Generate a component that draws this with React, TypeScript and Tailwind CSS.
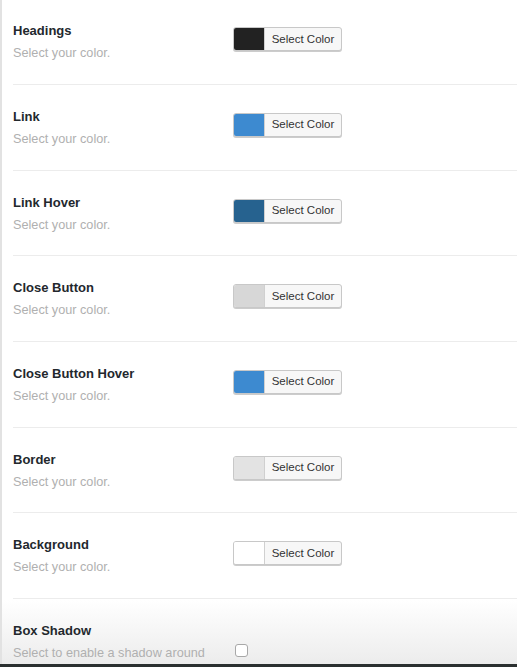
import { type FC } from 'react'

type ColorRow = {
  label: string
  color: string
}

const rows: ColorRow[] = [
  { label: 'Headings', color: '#222222' },
  { label: 'Link', color: '#3d8ad0' },
  { label: 'Link Hover', color: '#26628f' },
  { label: 'Close Button', color: '#d7d7d7' },
  { label: 'Close Button Hover', color: '#3d8ad0' },
  { label: 'Border', color: '#e3e3e3' },
  { label: 'Background', color: '#ffffff' },
]

const ColorButton: FC<{ color: string }> = ({ color }) => (
  <button className="mt-[4px] flex h-[24px] w-[109px] items-stretch overflow-hidden rounded-[3px] border border-[#c8c8c8] bg-[#f7f7f7] shadow-[0_1px_0_#ccc]">
    {/* swatch */}
    <span className="w-[31px] border-r border-[#d0d0d0]" style={{ backgroundColor: color }} />
    <span className="flex flex-1 items-center justify-center text-[11.5px] text-[#333]">Select Color</span>
  </button>
)

const App: FC = () => {
  return (
    <main
      className="h-[667px] overflow-hidden border-b-[3px] border-[#2b3030] bg-[linear-gradient(to_bottom,#ffffff_600px,#ececec)]"
      style={{ fontFamily: '"Liberation Sans", Arial, sans-serif' }}
    >
      <div className="h-full border-l-2 border-[#e2e2e2] pl-[11px]">
        {rows.map((r) => (
          <div key={r.label} className="flex border-b border-[#ececec] pt-[24px] pb-[22.67px] first:pt-[23.3px]">
            <div className="w-[220px]">
              <p className="h-[16px] text-[13px] font-bold leading-[16px] text-[#23282d]">{r.label}</p>
              <p className="mt-[6px] h-[16px] text-[12.7px] leading-[16px] text-[#b0b0b0]">Select your color.</p>
            </div>
            <ColorButton color={r.color} />
          </div>
        ))}

        {/* Box shadow toggle */}
        <div className="flex pt-[24px]">
          <div className="w-[222px]">
            <p className="h-[16px] text-[13px] font-bold leading-[16px] text-[#23282d]">Box Shadow</p>
            <p className="mt-[6px] h-[16px] text-[12.7px] leading-[16px] text-[#b0b0b0]">Select to enable a shadow around</p>
          </div>
          <span className="mt-[21px] h-[13px] w-[13px] rounded-[3px] border border-[#a8a8a8] bg-white" />
        </div>
      </div>
    </main>
  )
}

export default App
